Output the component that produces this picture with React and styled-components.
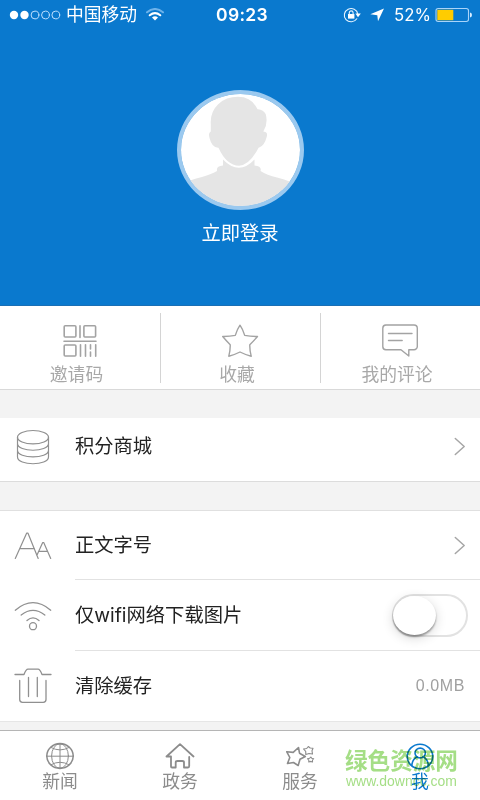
import React from "react";
import styled, { createGlobalStyle } from "styled-components";

const GlobalStyle = createGlobalStyle`
  * {
    box-sizing: border-box;
  }

  body {
    margin: 0;
    background: #f3f3f3;
    font-family: "Liberation Sans", "Noto Sans CJK SC", sans-serif;
  }
`;

/* icons */

const DotsIcon = () => (
  <Icon width="52" height="10" viewBox="0 0 52 10" $stroke="#bfe0ff" $line={1}>
    <circle cx="5" cy="5" r="4.2" fill="#fff" stroke="none" />
    <circle cx="15.5" cy="5" r="4.2" fill="#fff" stroke="none" />
    <circle cx="26" cy="5" r="3.9" />
    <circle cx="36.5" cy="5" r="3.9" />
    <circle cx="46.8" cy="5" r="3.9" />
  </Icon>
);

const SignalIcon = () => (
  <Icon width="18" height="13" viewBox="0 0 18 13" $stroke="#fff" $line={2}>
    <path d="M1 4.3Q9-2.3 17 4.3" stroke="#6cb2ea" />
    <path d="M3.7 7.3Q9 3 14.3 7.3" />
    <path d="M6 9.5Q9 7.2 12 9.5L9 12.5Z" fill="#fff" stroke="none" />
  </Icon>
);

const LockIcon = () => (
  <Icon width="18" height="16" viewBox="0 0 18 16" $stroke="#e6f4ff" $line={1.1}>
    <path d="M13.8 11.8A6.8 6.6 0 1 1 14.8 7" />
    <path d="M12.4 6.5h5.4L15 10.2Z" fill="#fff" stroke="none" />
    <rect x="5" y="7" width="6.4" height="4.6" fill="#fff" stroke="none" />
    <path d="M6.3 7.4V5.8a1.9 1.9 0 0 1 3.8 0v1.6" />
  </Icon>
);

const ArrowIcon = () => (
  <Icon width="14" height="14" viewBox="0 0 14 14" $stroke="none" $line={0}>
    <path d="M14 .5L8 13.3 7.3 7.2 .3 6.3Z" fill="#fff" />
  </Icon>
);

const BatteryIcon = () => (
  <Icon width="38" height="16" viewBox="0 0 38 16" $stroke="#a9d4fa" $line={1.1}>
    <rect x="1" y="1.5" width="32.5" height="13" rx="2.2" />
    <rect x="2.3" y="2.8" width="16" height="10.4" fill="#ffcc00" stroke="none" />
    <path d="M35 5.6q2 .3 2 2.4t-2 2.4Z" fill="#d8edff" stroke="none" />
  </Icon>
);

const AvatarImage = () => (
  <svg width="119" height="112" viewBox="0 0 119 112">
    <rect width="119" height="112" fill="#fff" />
    <g fill="#e5e5e5">
      <path d="M0 91C6 87 13 85 21 83Q31 80 36 77Q35 72 42 71.5V65.5Q58 82 73.5 65.5V71.5Q81 72 79.5 77Q86 81 96 83.5Q109 87 119 92V112H0Z" />
      <path
        d="M29 37Q26 39 28 45Q30 54 37 54.5Q45 72 58 72.5Q69 72 78 54.5Q84 53 86.500 43Q88 38 83.500 37Q88 29 85.500 20Q83 15 77 14.500C73 6 66 2 57 2C41 2 28 13 29 30Z"
        stroke="#fff"
        strokeWidth="1.6"
      />
    </g>
  </svg>
);

const QrIcon = () => (
  <Icon width="36" height="34" viewBox="0 0 36 34" $stroke="#a3a3a3" $line={1.6}>
    <rect x="2.2" y="1.8" width="11.7" height="11.2" rx="1" />
    <rect x="21.9" y="1.8" width="11.7" height="11.2" rx="1" />
    <rect x="2.2" y="21" width="11.7" height="11" rx="1" />
    <path d="M18 1.8v11.7M2 17.2h32M18.500 20.800v11.400M23.500 20.800v11.400M28.500 20.800v4.200M28.500 28v4.200M33.700 20.800v11.400" />
  </Icon>
);

const StarIcon = () => (
  <Icon width="38" height="34" viewBox="0 0 38 34" $stroke="#a3a3a3" $line={1.4}>
    <path d="M18 1.2Q20.8 5.2 22.7 11.4Q28.5 12.6 35.5 12.5Q31.5 17 27.8 20.7Q27.6 26 29.2 32.2Q23.5 30.8 18 28Q12.5 30.8 6.8 32.2Q8.4 26 8.2 20.7Q4.5 17 .7 12.5Q7.5 12.6 13.3 11.4Q15.2 5.2 18 1.2Z" />
  </Icon>
);

const CommentIcon = () => (
  <Icon width="38" height="34" viewBox="0 0 38 34" $stroke="#a3a3a3" $line={1.4}>
    <path d="M3.9 1H32a3.300 3.300 0 0 1 3.300 3.300V22.500A3.300 3.300 0 0 1 32 25.800H26.800V32L19 25.800H3.900A3.300 3.300 0 0 1 .8 22.500V4.300A3.300 3.300 0 0 1 3.900 1ZM6.500 9.500h23.500M6.500 16.500h13.700" />
  </Icon>
);

const CoinsIcon = () => (
  <Icon width="36" height="36" viewBox="0 0 36 36" $line={1.2}>
    <ellipse cx="18" cy="8.2" rx="15.5" ry="6.7" />
    <path d="M2.5 8v20C2.5 37 33.5 37 33.5 28V8M2.5 14.500c0 9 31 9 31 0M2.500 21.200c0 9 31 9 31 0" />
  </Icon>
);

const FontSizeIcon = () => (
  <Icon width="38" height="30" viewBox="0 0 38 30" $line={1.2}>
    <path d="M1.3 27.4L12.6 2.2h1.4L24.2 27.4M6.5 17.7h14M22.8 24.5L28.7 11.5h1L36.7 27.4M25.2 20.4h8.4" />
  </Icon>
);

const WifiIcon = () => (
  <Icon width="38" height="30" viewBox="0 0 38 30" $line={1.3}>
    <path d="M1.3 9.2Q19-5.8 36.7 9.2M7.2 14Q19 4.8 30.8 14M13 19.5Q19 14.3 25 19.5" />
    <circle cx="19" cy="25.2" r="3.5" />
  </Icon>
);

const TrashIcon = () => (
  <Icon width="38" height="36" viewBox="0 0 38 36" $line={1.3}>
    <path d="M1 6.5H10Q12 1.2 14 1.2H24Q26 1.2 28 6.5H37M5.7 12.5V31.5Q5.7 34.3 8.5 34.3H29.2Q32 34.3 32 31.5V12.5M14.5 9.5v19M23.3 9.5v19" />
  </Icon>
);

const ChevronIcon = () => (
  <Icon width="12" height="19" viewBox="0 0 12 19" $stroke="#a6a6a6" $line={1.5}>
    <path d="M1.3 1.5L10.2 9.5 1.3 17.5" />
  </Icon>
);

const GlobeIcon = () => (
  <Icon width="30" height="28" viewBox="0 0 30 28" $stroke="#8c8c8c" $line={1}>
    <ellipse cx="15" cy="14" rx="13.2" ry="12.4" strokeWidth="1.6" />
    <ellipse cx="15" cy="14" rx="8.4" ry="12.2" />
    <path d="M15 1.5v25M1.5 14.2h27M6 5.5Q15 10.5 24 5.5M6 22.7Q15 17.7 24 22.7" />
  </Icon>
);

const HomeIcon = () => (
  <Icon width="30" height="28" viewBox="0 0 30 28" $stroke="#8c8c8c" $line={1.8}>
    <path d="M1.5 14.5L15 2.2 28.5 14.5M1.5 14.5H6V24.5Q6 25.5 7 25.5H10.7V20.5Q10.7 19 12.5 19H17.3Q19 19 19 20.5V25.5H23Q24.2 25.5 24.2 24V15" />
  </Icon>
);

const StarsIcon = () => (
  <Icon width="30" height="28" viewBox="0 0 30 28" $stroke="#8c8c8c" $line={1.6}>
    <path d="M13.5 5.5L14.5 11.2 20.3 14.5 15 17.3 13.2 23.5 8.5 20.5 2.5 21.5 4.8 15.5 1.8 9.8 8.2 10.4Z" />
    <g strokeWidth="1.1">
      <path d="M23.3 4.5L25.2 6 28 6.2 27 8.8 27.5 12 24 11.5 20.8 12.5 20.7 9.4 18.5 7 21.7 6.5Z" />
      <path d="M25.8 15L26.7 16.2 28.7 16.7 27.5 18 27.5 20 25.5 19.4 23.8 20 23.8 18.2 22.5 16.7 24.7 16.2Z" />
    </g>
  </Icon>
);

const MeIcon = () => (
  <Icon width="30" height="28" viewBox="0 0 30 28" $stroke="#0a79ce" $line={1.6}>
    <ellipse cx="15" cy="14.5" rx="12.8" ry="12.3" />
    <ellipse cx="15.2" cy="11" rx="5.2" ry="4.9" />
    <path d="M6.8 23.5Q7.3 17 12.5 14.8M17.8 14.8Q22.9 17 23.4 23.5" />
  </Icon>
);

const shortcuts = [
  { label: "邀请码", icon: <QrIcon /> },
  { label: "收藏", icon: <StarIcon /> },
  { label: "我的评论", icon: <CommentIcon /> },
];

const tabs = [
  { label: "新闻", icon: <GlobeIcon /> },
  { label: "政务", icon: <HomeIcon /> },
  { label: "服务", icon: <StarsIcon /> },
  { label: "我", icon: <MeIcon />, active: true },
];

function StatusBar() {
  return (
    <StatusBarWrapper>
      <StatusLeft>
        <DotsIcon />
        <Carrier>中国移动</Carrier>
        <SignalIcon />
      </StatusLeft>
      <Clock>09:23</Clock>
      <StatusRight>
        <LockIcon />
        <ArrowIcon />
        <Percent>52%</Percent>
        <BatteryIcon />
      </StatusRight>
    </StatusBarWrapper>
  );
}

function SettingRow({ icon, label, height, divider, children }) {
  return (
    <Row $height={height}>
      <RowIcon>{icon}</RowIcon>
      <RowBody $divider={divider}>
        <RowLabel>{label}</RowLabel>
        {children}
      </RowBody>
    </Row>
  );
}

function App() {
  return (
    <Screen>
      <GlobalStyle />
      <Hero>
        <StatusBar />
        <Avatar>
          <AvatarImage />
        </Avatar>
        <LoginText>立即登录</LoginText>
      </Hero>

      <Shortcuts>
        {shortcuts.map((item) => (
          <Shortcut key={item.label}>
            {item.icon}
            <ShortcutLabel>{item.label}</ShortcutLabel>
          </Shortcut>
        ))}
      </Shortcuts>

      <MallSection>
        <SettingRow icon={<CoinsIcon />} label="积分商城" height={57}>
          <ChevronIcon />
        </SettingRow>
      </MallSection>

      <SettingsSection>
        <SettingRow icon={<FontSizeIcon />} label="正文字号" height={69} divider>
          <ChevronIcon />
        </SettingRow>
        <SettingRow icon={<WifiIcon />} label="仅wifi网络下载图片" height={71} divider>
          <Toggle>
            <Knob />
          </Toggle>
        </SettingRow>
        <SettingRow icon={<TrashIcon />} label="清除缓存" height={70}>
          <CacheSize>0.0MB</CacheSize>
        </SettingRow>
      </SettingsSection>

      <TabBar>
        {tabs.map((tab) => (
          <Tab key={tab.label} $active={tab.active}>
            {tab.icon}
            <TabLabel>{tab.label}</TabLabel>
          </Tab>
        ))}
        <Watermark>
          <WatermarkName>绿色资源网</WatermarkName>
          <WatermarkUrl>www.downcc.com</WatermarkUrl>
        </Watermark>
      </TabBar>
    </Screen>
  );
}

export default App;

const Icon = styled.svg`
  display: block;
  flex-shrink: 0;
  fill: none;
  stroke: ${({ $stroke }) => $stroke || "#909090"};
  stroke-width: ${({ $line }) => $line};
  stroke-linecap: round;
  stroke-linejoin: round;
`;

const Screen = styled.div`
  width: 480px;
  height: 800px;
  display: flex;
  flex-direction: column;
  background: #f3f3f3;
  overflow: hidden;
`;

const Hero = styled.header`
  height: 306px;
  flex-shrink: 0;
  display: flex;
  flex-direction: column;
  align-items: center;
  background: #0a79ce;
  border-bottom: 1px solid #1a6fb5;
  color: #fff;
`;

const StatusBarWrapper = styled.div`
  width: 100%;
  height: 29px;
  padding: 0 7px 0 9px;
  display: grid;
  grid-template-columns: 1fr auto 1fr;
  align-items: center;
`;

const StatusLeft = styled.div`
  display: flex;
  align-items: center;
`;

const Carrier = styled.span`
  margin: 0 9px 0 5px;
  font-size: 17.8px;
  line-height: 28px;
`;

const Clock = styled.span`
  padding-left: 2px;
  font-family: Inter, sans-serif;
  font-weight: 600;
  font-size: 17.5px;
  letter-spacing: 0.3px;
`;

const StatusRight = styled.div`
  display: flex;
  align-items: center;
  justify-content: flex-end;

  ${Icon}:nth-child(2) {
    margin: 0 10px 0 9px;
  }
`;

const Percent = styled.span`
  margin-right: 4px;
  font-family: Inter, sans-serif;
  font-size: 16.8px;
`;

const Avatar = styled.div`
  width: 127px;
  height: 120px;
  margin-top: 61px;
  border: 4px solid #9bc9ef;
  border-radius: 50%;
  overflow: hidden;
`;

const LoginText = styled.div`
  margin-top: 10px;
  font-size: 19.3px;
  line-height: 28px;
`;

const Shortcuts = styled.nav`
  height: 84px;
  flex-shrink: 0;
  padding: 7px 0 6px;
  display: grid;
  grid-template-columns: repeat(3, 1fr);
  grid-template-rows: 70px;
  background: #fff;
  border-bottom: 1px solid #d9d9d9;
`;

const Shortcut = styled.div`
  display: flex;
  flex-direction: column;
  align-items: center;
  padding-top: 11px;

  & + & {
    border-left: 1px solid #d4d4d4;
  }
`;

const ShortcutLabel = styled.span`
  margin-top: 5px;
  margin-left: -7px;
  font-size: 17.8px;
  line-height: 25px;
  color: #a8a8a8;
`;

const MallSection = styled.section`
  margin-top: 28px;
  padding-bottom: 6px;
  background: #fff;
  border-bottom: 1px solid #dcdcdc;
`;

const SettingsSection = styled.section`
  margin-top: 28px;
  background: #fff;
  border-top: 1px solid #e0e0e0;
  border-bottom: 1px solid #e6e6e6;
`;

const Row = styled.div`
  height: ${({ $height }) => $height}px;
  display: flex;
`;

const RowIcon = styled.div`
  width: 75px;
  padding-right: 9px;
  display: flex;
  align-items: center;
  justify-content: center;
`;

const RowBody = styled.div`
  flex: 1;
  padding-right: 14px;
  display: flex;
  align-items: center;
  justify-content: space-between;
  border-bottom: ${({ $divider }) => ($divider ? "1px solid #e2e2e2" : "none")};
`;

const RowLabel = styled.span`
  padding-bottom: 1px;
  font-family: Inter, "Noto Sans CJK SC", sans-serif;
  font-size: 19.3px;
  line-height: 30px;
  color: #222;
`;

const Toggle = styled.div`
  width: 76px;
  height: 43px;
  margin-right: -2px;
  border: 2px solid #e2e2e2;
  border-radius: 22px;
`;

const Knob = styled.div`
  width: 43px;
  height: 39px;
  margin-left: -1px;
  border-radius: 50%;
  background: #fff;
  box-shadow: 0 2px 2px rgba(0, 0, 0, 0.35), 0 3px 12px rgba(0, 0, 0, 0.16);
`;

const CacheSize = styled.span`
  margin-right: 1px;
  font-family: "Liberation Sans", sans-serif;
  font-size: 16px;
  letter-spacing: 0.6px;
  color: #a0a0a0;
`;

const TabBar = styled.footer`
  position: relative;
  height: 70px;
  margin-top: auto;
  flex-shrink: 0;
  display: grid;
  grid-template-columns: repeat(4, 1fr);
  background: #fff;
  border-top: 1px solid #b5b5b5;
`;

const Tab = styled.div`
  display: flex;
  flex-direction: column;
  align-items: center;
  padding-top: 11px;
  color: ${({ $active }) => ($active ? "#0a79ce" : "#8c8c8c")};
`;

const TabLabel = styled.span`
  font-size: 17.8px;
  line-height: 24px;
`;

const Watermark = styled.div`
  position: absolute;
  right: 22px;
  top: 17px;
  width: 113px;
  display: flex;
  flex-direction: column;
  color: #a5de86;
  mix-blend-mode: multiply;
  white-space: nowrap;
`;

const WatermarkName = styled.span`
  font-weight: 700;
  font-size: 22.6px;
  line-height: 27px;
`;

const WatermarkUrl = styled.span`
  margin-top: -2px;
  margin-left: 1px;
  font-size: 15.5px;
  line-height: 16px;
  transform: scaleX(0.9);
  transform-origin: left;
`;
